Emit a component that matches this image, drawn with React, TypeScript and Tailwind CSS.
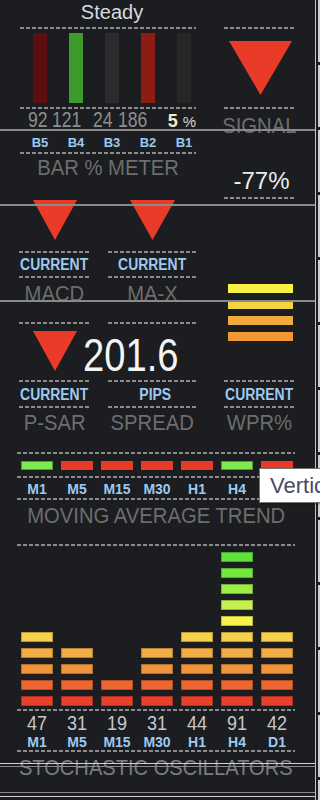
import React from "react";

const Dash = ({ className = "" }: { className?: string }) => (
  <div
    className={`h-[2px] shrink-0 bg-[repeating-linear-gradient(90deg,#8c8c8c_0px,#8c8c8c_4px,transparent_4px,transparent_6px)] ${className}`}
  />
);

const Tri = ({ w, h }: { w: number; h: number }) => (
  <svg width={w} height={h} viewBox={`0 0 ${w} ${h}`} className="block">
    <polygon points={`0,0 ${w},0 ${w / 2},${h}`} fill="#ea3a28" />
  </svg>
);

const Blue = ({ children, className = "" }: { children: React.ReactNode; className?: string }) => (
  <div className={`flex h-[23px] justify-center text-[16px] font-bold leading-[23px] text-[#9ccaf0] ${className}`}>
    <span className="inline-block shrink-0 scale-x-[0.87]">{children}</span>
  </div>
);

const Big = ({ children, className = "" }: { children: React.ReactNode; className?: string }) => (
  <div className={`flex h-[28px] justify-center whitespace-nowrap text-[22px] leading-[28px] text-[#6e6e6e] ${className}`}>
    <span className="inline-block shrink-0 scale-x-[0.92]">{children}</span>
  </div>
);

const topBars = ["bg-[#5c0f0e]", "bg-[#3f9a2e]", "bg-[#2b2b2b]", "bg-[#8e1c14]", "bg-[#272727]"];
const bLabels = ["B5", "B4", "B3", "B2", "B1"];

const maBars = [true, false, false, false, false, true, false];
const tf = ["M1", "M5", "M15", "M30", "H1", "H4", "D1"];

const segColors = [
  "bg-[#5fe23a]",
  "bg-[#72e83c]",
  "bg-[#9cee44]",
  "bg-[#c6f050]",
  "bg-[#f6f44c]",
  "bg-[#f6d24a]",
  "bg-[#f2ac44]",
  "bg-[#f0943a]",
  "bg-[#ee6630]",
  "bg-[#e8402a]",
];
const stoch = [
  { v: 47, n: 5 },
  { v: 31, n: 4 },
  { v: 19, n: 2 },
  { v: 31, n: 4 },
  { v: 44, n: 5 },
  { v: 91, n: 10 },
  { v: 42, n: 5 },
];

export default function App() {
  return (
    <div className="relative h-[800px] w-[320px] overflow-hidden bg-[#1b1d20] font-['Liberation_Sans',Arial,sans-serif]">
      {/* top section */}
      <div className="flex h-[200px]">
        <div className="ml-[20px] flex w-[176px] flex-col">
          <div className="h-[27px] pl-[8px] text-center text-[20px] leading-[24px] text-[#d6dade]">Steady</div>
          <Dash />
          <div className="ml-[2px] mt-[4px] grid h-[70px] grid-cols-[repeat(5,36px)]">
            {topBars.map((c, i) => (
              <div key={i} className={`mx-auto h-full w-[14px] ${c}`} />
            ))}
          </div>
          <Dash className="mt-[4px]" />
          <div className="flex h-[22px] items-start text-[22px] leading-[22px] text-[#8e8e8e]">
            <span className="ml-[8px] w-[27px]">
              <span className="inline-block origin-left scale-x-[0.8]">92</span>
            </span>
            <span className="w-[45px]">
              <span className="inline-block origin-left scale-x-[0.8]">121</span>
            </span>
            <span className="w-[27px]">
              <span className="inline-block origin-left scale-x-[0.8]">24</span>
            </span>
            <span className="w-[55px]">
              <span className="inline-block origin-left scale-x-[0.8]">186</span>
            </span>
            <span className="mt-[2px] text-[18px] font-bold leading-[20px] text-[#f2e8c8]">5</span>
            <span className="ml-[5px] mt-[4px] text-[15px] leading-[18px] text-[#d8d8d8]">%</span>
          </div>
          <div className="ml-[2px] mt-[3px] grid h-[18px] grid-cols-[repeat(5,36px)] text-center text-[13px] font-bold leading-[18px] text-[#9ccaf0]">
            {bLabels.map((b) => (
              <div key={b}>{b}</div>
            ))}
          </div>
          <Dash />
          <Big>BAR % METER</Big>
        </div>
        <div className="ml-[28px] flex w-[71px] flex-col">
          <div className="h-[27px]" />
          <Dash />
          <div className="mt-[12px] flex justify-center pl-[2px]">
            <Tri w={63} h={54} />
          </div>
          <Dash className="mt-[12px]" />
          <Big className="mt-[2px] h-[30px] leading-[30px]">SIGNAL</Big>
          <div className="mt-[26px] h-[28px] pl-[4px] text-center text-[24px] leading-[28px] text-[#ececec]">-77%</div>
          <Dash className="mt-[2px]" />
        </div>
      </div>

      {/* section 2/3 */}
      <div className="ml-[19px] flex h-[237px]">
        <div className="flex w-[71px] flex-col">
          <div className="flex justify-center">
            <Tri w={44} h={40} />
          </div>
          <Dash className="mt-[11px]" />
          <Blue>CURRENT</Blue>
          <Dash />
          <Big className="mt-[2px]">MACD</Big>
          <Dash className="mt-[14px]" />
          <div className="h-[56px] pl-[14px] pt-[7px]">
            <Tri w={44} h={40} />
          </div>
          <Dash />
          <Blue className="mt-[1px]">CURRENT</Blue>
          <Dash />
          <Big className="mt-[1px]">P-SAR</Big>
        </div>
        <div className="ml-[18px] flex w-[88px] flex-col">
          <div className="flex justify-center">
            <Tri w={45} h={40} />
          </div>
          <Dash className="mt-[11px]" />
          <Blue>CURRENT</Blue>
          <Dash />
          <Big className="mt-[2px]">MA-X</Big>
          <Dash className="mt-[14px]" />
          <div className="h-[56px]">
            <div className="ml-[-25px] mt-[8px] whitespace-nowrap text-[46px] leading-[46px] text-[#f4f4f4]">
              <span className="inline-block origin-left scale-x-[0.83]">201.6</span>
            </div>
          </div>
          <Dash />
          <Blue className="mt-[1px] pl-[6px]">PIPS</Blue>
          <Dash />
          <Big className="mt-[1px]">SPREAD</Big>
        </div>
        <div className="ml-[28px] flex w-[71px] flex-col">
          <div className="h-[84px]" />
          <div className="ml-[4px] flex w-[65px] flex-col gap-[7px]">
            <div className="h-[9px] bg-[#f7f245]" />
            <div className="h-[9px] bg-[#f5d444]" />
            <div className="h-[9px] bg-[#f2aa40]" />
            <div className="h-[9px] bg-[#f09838]" />
          </div>
          <Dash className="mt-[39px]" />
          <Blue className="mt-[1px]">CURRENT</Blue>
          <Dash />
          <Big className="mt-[1px]">WPR%</Big>
        </div>
      </div>

      {/* moving average + stochastic */}
      <div className="ml-[17px] flex w-[280px] flex-col">
        <Dash className="mt-[15px] w-[278px]" />
        <div className="mt-[7px] grid h-[9px] grid-cols-7">
          {maBars.map((g, i) => (
            <div
              key={i}
              className={`mx-auto h-full w-[32px] ${g ? "border border-[#4f9a2c] bg-[#7deb4e]" : "bg-[#ea3b29]"}`}
            />
          ))}
        </div>
        <Dash className="mt-[6px] w-[278px]" />
        <div className="grid h-[20px] grid-cols-7 pt-[1px] text-center text-[14px] font-bold leading-[20px] text-[#9ccaf0]">
          {tf.map((t, i) => (
            <div key={t}>{i < 6 ? t : ""}</div>
          ))}
        </div>
        <Dash className="w-[278px]" />
        <Big className="mt-[2px] w-[278px]">MOVING AVERAGE TREND</Big>
        <Dash className="mt-[14px] w-[278px]" />
        <div className="mt-[6px] grid h-[154px] grid-cols-7">
          {stoch.map((s, i) => (
            <div key={i} className="flex flex-col items-center justify-end gap-[6px]">
              {segColors.slice(10 - s.n).map((c, k) => (
                <div key={k} className={`h-[10px] w-[32px] border border-black/25 ${c}`} />
              ))}
            </div>
          ))}
        </div>
        <Dash className="mt-[3px] w-[278px]" />
        <div className="mt-[1px] grid h-[22px] grid-cols-7 text-center text-[20px] leading-[22px] text-[#c4c8cc]">
          {stoch.map((s, i) => (
            <div key={i}>
              <span className="inline-block scale-x-[0.9]">{s.v}</span>
            </div>
          ))}
        </div>
        <div className="grid h-[16px] grid-cols-7 text-center text-[14px] font-bold leading-[16px] text-[#9ccaf0]">
          {tf.map((t) => (
            <div key={t}>{t}</div>
          ))}
        </div>
        <Dash className="w-[278px]" />
        <div className="mt-[3px] flex h-[26px] w-[278px] justify-center whitespace-nowrap text-[22px] leading-[26px] text-[#7c7c7c]">
          <span className="inline-block shrink-0 scale-x-[0.914]">STOCHASTIC OSCILLATORS</span>
        </div>
      </div>

      {/* chart grid lines over the panel */}
      <div className="absolute left-0 top-[129px] h-[2px] w-[315px] bg-[#8a8a8a]" />
      <div className="absolute left-0 top-[204px] h-[2px] w-[315px] bg-[#8a8a8a]" />
      <div className="absolute left-0 top-[300px] h-[2px] w-[315px] bg-[#8a8a8a]" />
      <div className="absolute left-0 top-[763px] h-px w-[315px] bg-[#d0d0d0]" />
      <div className="absolute left-0 top-[766px] h-px w-[315px] bg-[#8a8a8a]" />
      <div className="absolute left-0 top-[792px] h-px w-[315px] bg-[#8a8a8a]" />
      <div className="absolute left-0 top-[796px] h-px w-[315px] bg-[#d0d0d0]" />
      <div className="absolute left-[315px] top-0 h-[800px] w-px bg-[#c4c4c4]" />
      <div className="absolute left-[318px] top-0 h-[800px] w-[2px] bg-[repeating-linear-gradient(180deg,#cfcfcf_0px,#cfcfcf_62px,#1b1d20_62px,#1b1d20_65px)]" />

      {/* tooltip */}
      <div className="absolute left-[259px] top-[468px] h-[35px] w-[80px] overflow-hidden whitespace-nowrap border border-[#767676] bg-white pl-[10px] text-[22px] leading-[33px] text-[#4a4a64] shadow-[1px_1px_2px_rgba(0,0,0,0.4)]">
        Vertical line
      </div>
    </div>
  );
}
